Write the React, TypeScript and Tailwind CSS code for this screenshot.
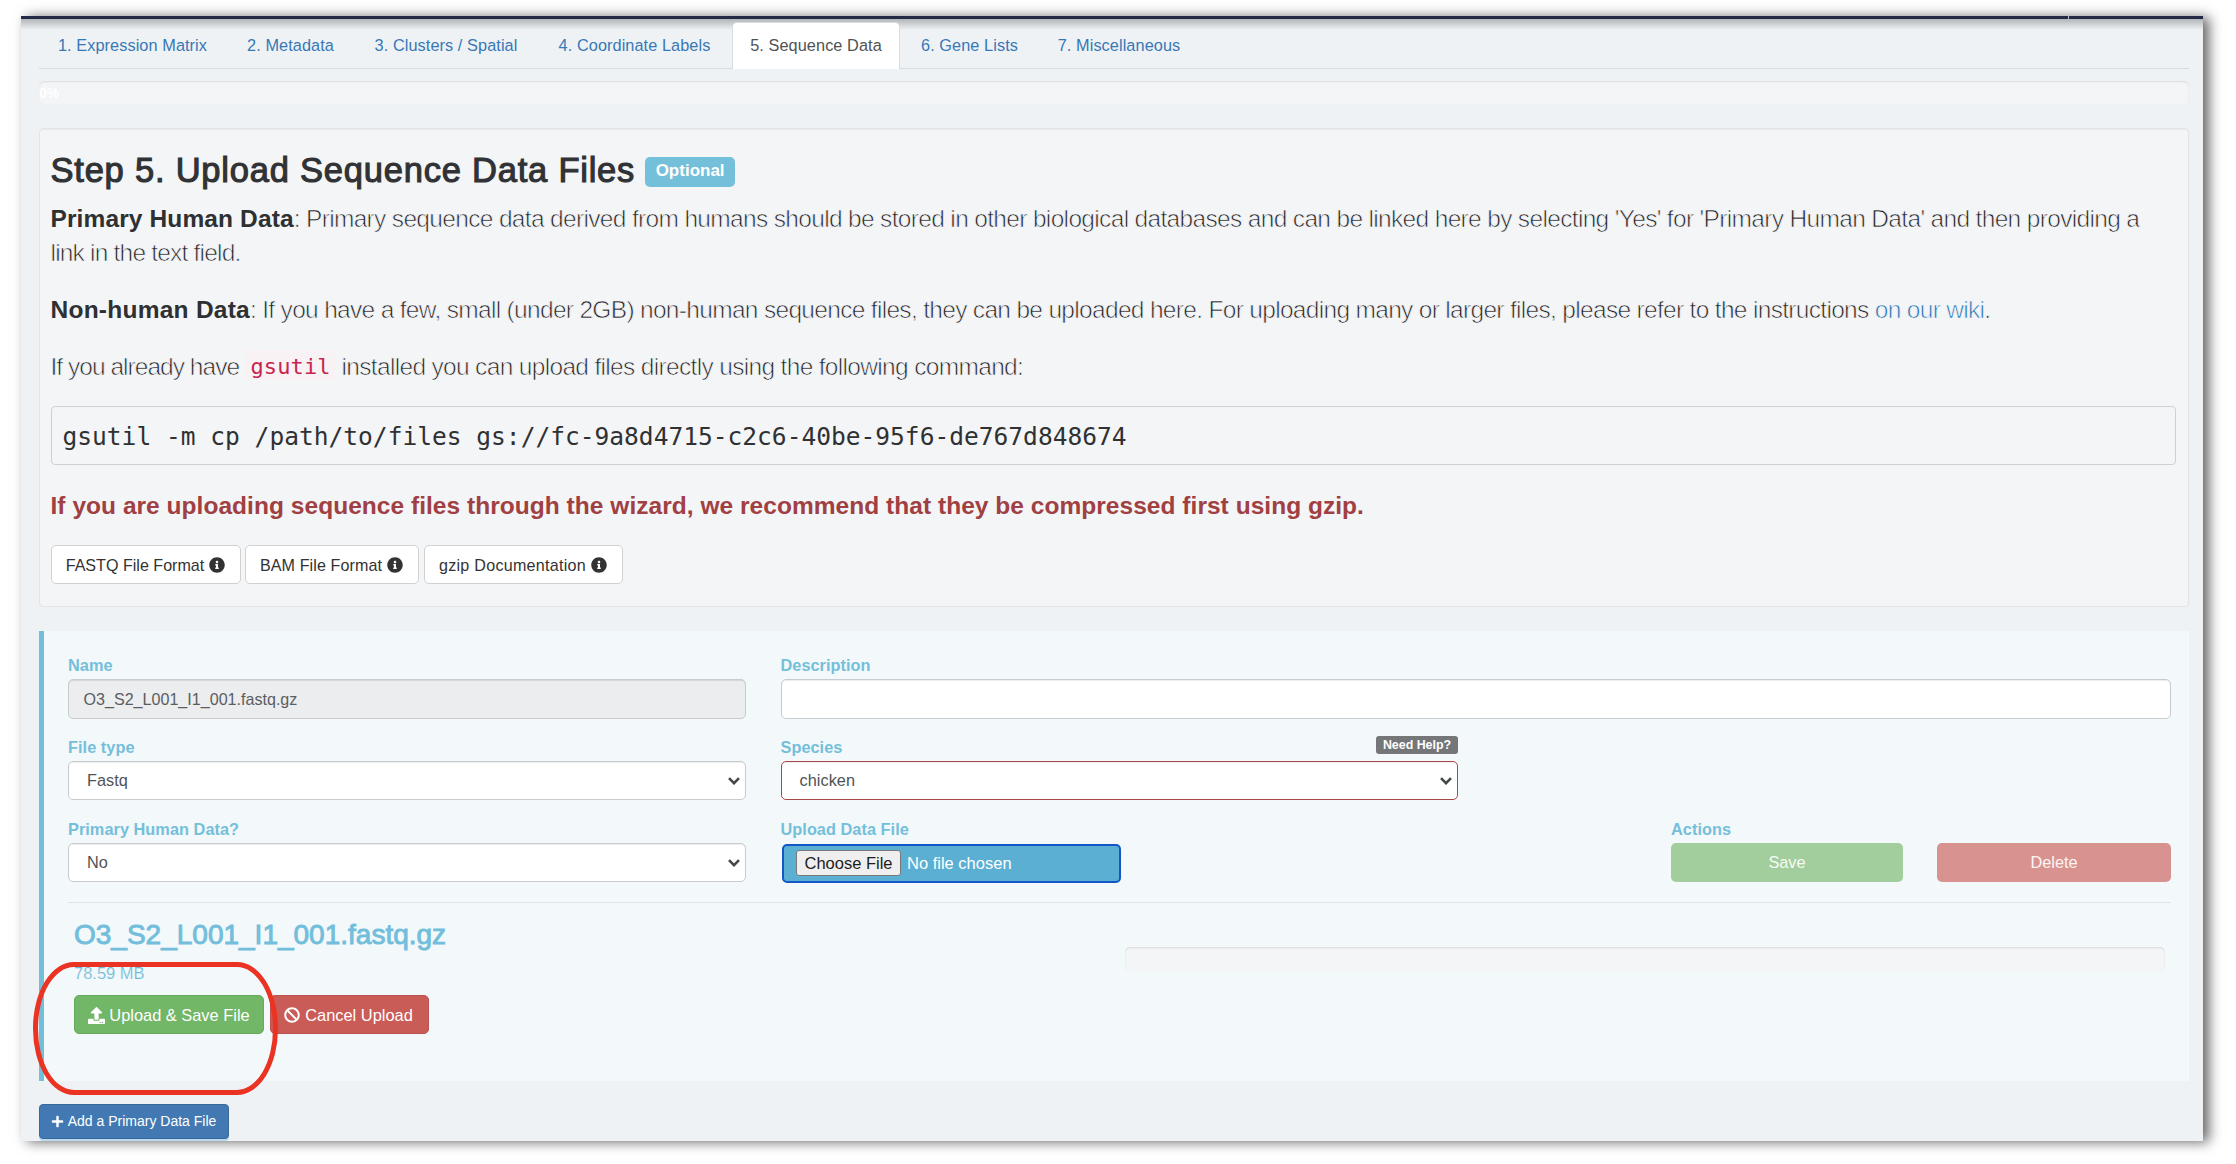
import type { ReactNode } from "react";
import { FaBan, FaInfoCircle, FaPlus, FaUpload } from "react-icons/fa";

const tabs = [
  { label: "1. Expression Matrix", width: "w-[187px]" },
  { label: "2. Metadata", width: "w-[125px]" },
  { label: "3. Clusters / Spatial", width: "w-[182px]" },
  { label: "4. Coordinate Labels", width: "w-[191px]" },
  { label: "5. Sequence Data", width: "w-[168px]", active: true },
  { label: "6. Gene Lists", width: "w-[135px]" },
  { label: "7. Miscellaneous", width: "w-[160px]" },
];

function Tabs() {
  return (
    <nav className="mt-[3px] flex h-[47px] gap-[2px] border-b border-[#d9dcde] text-[16.3px] tracking-[0.08px]">
      {tabs.map((t) => (
        <div
          key={t.label}
          className={
            t.active
              ? `${t.width} flex h-[47px] shrink-0 items-center justify-center rounded-t-[5px] border border-b-0 border-[#d9dcde] bg-white pb-[1px] text-[#4f5355]`
              : `${t.width} flex h-[46px] shrink-0 items-center justify-center text-[#3878b5]`
          }
        >
          {t.label}
        </div>
      ))}
    </nav>
  );
}

function Light({ children }: { children: ReactNode }) {
  return (
    <span className="text-[#202022] [-webkit-text-stroke:0.7px_#f4f5f7]">{children}</span>
  );
}

function DocButton({ label, width }: { label: string; width: string }) {
  return (
    <button className={`${width} flex h-[39px] items-center justify-center gap-[5px] rounded-[5px] border border-[#cfd1d3] bg-white text-[16.1px] whitespace-nowrap text-[#333]`}>
      {label}
      <FaInfoCircle className="size-4" />
    </button>
  );
}

function Label({ children }: { children: ReactNode }) {
  return <div className="h-[24px] text-[16.3px] leading-[20px] font-bold tracking-[0.05px] text-[#74bfda]">{children}</div>;
}

function Select({ value, error }: { value: string; error?: boolean }) {
  return (
    <div
      className={
        error
          ? "flex h-[39px] items-center justify-between rounded-[5px] border-[1.5px] border-[#a9474a] bg-white pr-[5px] pl-[18px] shadow-[inset_0_1px_1px_rgba(0,0,0,0.075)]"
          : "flex h-[39px] items-center justify-between rounded-[5px] border border-[#c9cccf] bg-white pr-[5px] pl-[18px] shadow-[inset_0_1px_1px_rgba(0,0,0,0.075)]"
      }
    >
      <span className="text-[16.3px] tracking-[0.05px] text-[#505355]">{value}</span>
      <svg className="h-[8px] w-[12px]" viewBox="0 0 12 8" fill="none" stroke="#45484a" strokeWidth="2.6">
        <path d="M1 1.2 L6 6.2 L11 1.2" />
      </svg>
    </div>
  );
}

export default function App() {
  return (
    <div className="h-[1164px] w-[2236px] overflow-hidden bg-white pt-4 pl-[21px] font-['Liberation_Sans',Arial,sans-serif]">
      <div className="relative flex h-[1125px] w-[2182px] flex-col bg-[#eef2f5] shadow-[6px_1px_12px_rgba(0,0,0,0.6)]">
        <div className="h-[3px] shrink-0 bg-[#222a45] pl-[2047px]">
          <div className="h-[3px] w-[1px] bg-[#b9bdc9]" />
        </div>
        <div className="pointer-events-none absolute inset-x-0 top-[3px] h-[11px] bg-gradient-to-b from-black/25 to-transparent" />

        <div className="relative flex flex-col pr-[14px] pl-[18px]">
          <Tabs />

          <div className="mt-[12px] h-[23px] rounded-[5px] bg-[#f3f5f7] text-[14px] leading-[24px] font-bold text-white shadow-[inset_0_1px_2px_rgba(0,0,0,0.1)]">0%</div>

          <section className="mt-[24px] flex h-[479px] flex-col rounded-[4px] border border-[#e2e5e7] bg-[#f4f5f7] pr-[11px] pl-[10.5px] text-[24.5px] leading-[34px] shadow-[inset_0_1px_1px_rgba(0,0,0,0.05)]">
            <div className="mt-[22px] flex h-[38px] items-center gap-[10px]">
              <h1 className="text-[34.5px] leading-[38px] tracking-[0.78px] text-[#303235] [-webkit-text-stroke:1.1px_#303235]">
                Step 5. Upload Sequence Data Files
              </h1>
              <span className="mt-[3px] flex h-[30px] w-[90px] items-center justify-center rounded-[5px] bg-[#74bfda] pb-px text-[17px] font-bold text-white">
                Optional
              </span>
            </div>
            <p className="mt-[13px] tracking-[-0.665px]">
              <b className="tracking-[0.12px] text-[#2e3032]">Primary Human Data</b>
              <Light>
                : Primary sequence data derived from humans should be stored in other biological databases and can be
                linked here by selecting 'Yes' for 'Primary Human Data' and then providing a<br />
                <span className="tracking-[-0.8px]">link in the text field.</span>
              </Light>
            </p>
            <p className="mt-[23px] tracking-[-0.685px] whitespace-nowrap">
              <b className="tracking-[0.25px] text-[#2e3032]">Non-human Data</b>
              <Light>
                : If you have a few, small (under 2GB) non-human sequence files, they can be uploaded here. For
                uploading many or larger files, please refer to the instructions{" "}
                <a className="text-[#2470b4]">on our wiki</a>.
              </Light>
            </p>
            <p className="mt-[23px] flex tracking-[-0.67px]">
              <span className="w-[189px] tracking-[-0.97px] whitespace-nowrap">
                <Light>If you already have</Light>
              </span>
              <code className="mr-[6px] ml-[5px] h-[30px] w-[91px] rounded-[5px] bg-[#f8f2f5] pl-[6px] font-['DejaVu_Sans_Mono',monospace] text-[22px] tracking-[0.1px] text-[#c7254e]">
                gsutil
              </code>
              <Light>installed you can upload files directly using the following command:</Light>
            </p>
            <pre className="mt-[22px] flex h-[59px] w-[2125px] shrink-0 items-center rounded-[4px] border border-[#ced1d3] bg-[#f4f5f7] pt-[3px] pl-[11px] font-['DejaVu_Sans_Mono',monospace] text-[24.55px] text-[#2f3133]">
              gsutil -m cp /path/to/files gs://fc-9a8d4715-c2c6-40be-95f6-de767d848674
            </pre>
            <p className="mt-[24px] font-bold tracking-[0.035px] text-[#a04042]">
              If you are uploading sequence files through the wizard, we recommend that they be compressed first using gzip.
            </p>
            <div className="mt-[22px] flex">
              <DocButton label="FASTQ File Format" width="mr-[4px] w-[190px]" />
              <DocButton label="BAM File Format" width="mr-[5px] w-[174px] tracking-[0.1px]" />
              <DocButton label="gzip Documentation" width="w-[199px] tracking-[0.27px]" />
            </div>
          </section>

          <section className="mt-[24px] h-[450px] border-l-[5px] border-[#72bedb] bg-[#f3f8fb] pt-[24px] pr-[18px] pl-[24px]">
            <div className="flex h-[82px] gap-[35px]">
              <div className="w-[677.5px]">
                <Label>Name</Label>
                <div className="flex h-[40px] items-center rounded-[5px] border border-[#c9cccf] bg-[#ecedef] pl-[14.5px] text-[16.1px] text-[#5b5e60] shadow-[inset_0_1px_1px_rgba(0,0,0,0.1)]">
                  O3_S2_L001_I1_001.fastq.gz
                </div>
              </div>
              <div className="flex-1">
                <Label>Description</Label>
                <div className="h-[40px] rounded-[5px] border border-[#c9cccf] bg-white shadow-[inset_0_1px_1px_rgba(0,0,0,0.075)]" />
              </div>
            </div>
            <div className="flex h-[82px] gap-[35px]">
              <div className="w-[677.5px]">
                <Label>File type</Label>
                <Select value="Fastq" />
              </div>
              <div className="w-[677.5px]">
                <div className="flex justify-between">
                  <Label>Species</Label>
                  <span className="-mt-px flex h-[18px] w-[82px] items-center justify-center rounded-[3px] bg-[#747678] text-[12.4px] font-bold text-white">
                    Need Help?
                  </span>
                </div>
                <Select value="chicken" error />
              </div>
            </div>
            <div className="flex h-[83px]">
              <div className="mr-[35px] w-[677.5px]">
                <Label>Primary Human Data?</Label>
                <Select value="No" />
              </div>
              <div className="w-[890.5px]">
                <Label>Upload Data File</Label>
                <div className="mt-px ml-px flex h-[39px] w-[339.5px] items-center rounded-[5px] border-2 border-[#1357c8] bg-[#5aafd3] pb-px pl-[12.5px]">
                  <span className="flex h-[26px] w-[105px] items-center justify-center rounded-[3px] border border-[#77797b] bg-[#efefef] text-[16.5px] text-[#1c1c1c]">
                    Choose File
                  </span>
                  <span className="ml-[6px] text-[16.5px] text-white">No file chosen</span>
                </div>
              </div>
              <div className="flex-1">
                <Label>Actions</Label>
                <div className="flex gap-[34px] text-[16.3px] text-white/90">
                  <div className="flex h-[39px] w-[232px] items-center justify-center rounded-[5px] bg-[#a1ce9c]">Save</div>
                  <div className="flex h-[39px] flex-1 items-center justify-center rounded-[5px] bg-[#d8928f]">Delete</div>
                </div>
              </div>
            </div>
            <div className="flex h-[179px] justify-between border-t border-[#dfe4e7] pr-[6px] pl-[6px]">
              <div className="pt-[14px]">
                <div className="text-[28px] leading-[36px] text-[#72bedb] [-webkit-text-stroke:0.9px_#72bedb]">
                  O3_S2_L001_I1_001.fastq.gz
                </div>
                <div className="mt-[8px] text-[16.5px] leading-[24px] text-[#68b8d8] [-webkit-text-stroke:0.2px_#f3f8fb]">78.59 MB</div>
                <div className="mt-[10px] flex gap-[6px] text-[16.4px] text-white">
                  <div className="flex h-[39px] w-[190px] items-center justify-center gap-[4px] rounded-[5px] border border-[#66ab5b] bg-[#72b667] pt-px">
                    <FaUpload className="size-[17px]" />
                    Upload &amp; Save File
                  </div>
                  <div className="flex h-[39px] w-[159px] items-center justify-center gap-[5px] rounded-[5px] border border-[#bd514e] bg-[#ca5c58] pt-px pr-[2px]">
                    <FaBan className="size-4" />
                    Cancel Upload
                  </div>
                </div>
              </div>
              <div className="mt-[44px] h-[24px] w-[1040px] rounded-[5px] bg-[#f4f5f7] shadow-[inset_0_1px_2px_rgba(0,0,0,0.12)]" />
            </div>
          </section>

          <div className="mt-[23px] flex h-[35px] w-[190px] items-center justify-center gap-[4px] rounded-[4px] border border-[#38699b] bg-[#4279b3] pr-px text-[14px] text-white shadow-[0_2px_0_#bcd9f0]">
            <FaPlus className="size-[13px]" />
            Add a Primary Data File
          </div>
        </div>

        <div className="pointer-events-none absolute top-[946px] left-[12px] h-[133px] w-[245px] rounded-[41px/66px] border-[5.5px] border-[#ea3323]" />
      </div>
    </div>
  );
}
